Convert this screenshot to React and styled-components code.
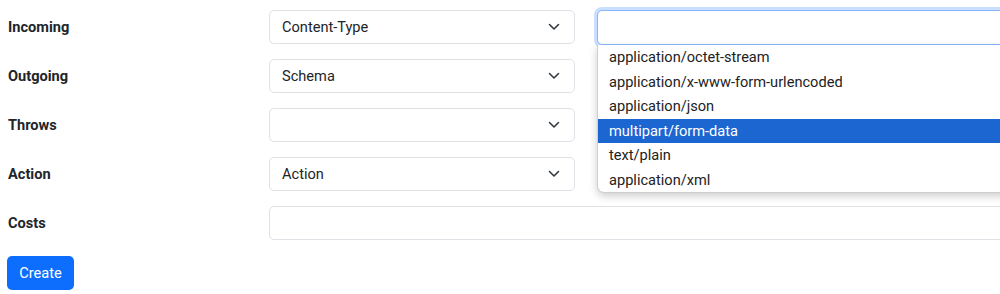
import React from "react";
import styled, { createGlobalStyle } from "styled-components";

const GlobalStyle = createGlobalStyle`
  html, body {
    margin: 0;
    padding: 0;
    background: #fff;
    overflow: hidden;
  }
  body {
    font-family: Roboto, "Liberation Sans", sans-serif;
    color: #212529;
    font-size: 14.6px;
  }
`;

const Page = styled.div`
  position: relative;
  width: 1000px;
  height: 294px;
  overflow: hidden;
  padding: 10px 0 0 8px;
  box-sizing: border-box;
`;

const Form = styled.div`
  display: flex;
  flex-direction: column;
  gap: 15px;
`;

const Row = styled.div`
  display: flex;
  align-items: center;
  gap: 22px;
  height: 34px;
`;

const Label = styled.div`
  flex-shrink: 0;
  width: 261px;
  margin-right: -22px;
  font-weight: 700;
  font-size: 14.6px;
`;

const SelectBox = styled.div`
  box-sizing: border-box;
  width: ${(p) => p.width || 306}px;
  height: ${(p) => (p.focused ? 35 : 34)}px;
  flex-shrink: 0;
  display: flex;
  align-items: center;
  justify-content: space-between;
  padding: 0 14px 0 12px;
  border: 1px solid ${(p) => (p.focused ? "#86b7fe" : "#dee2e6")};
  border-radius: 5px;
  background: #fff;
  box-shadow: ${(p) => (p.focused ? "0 0 0 3px rgba(13, 110, 253, 0.22)" : "none")};
  font-size: 14.6px;
  color: #212529;
`;

const Input = styled.div`
  box-sizing: border-box;
  width: 760px;
  height: 34px;
  flex-shrink: 0;
  border: 1px solid #dee2e6;
  border-radius: 5px;
  background: #fff;
`;

const Button = styled.button`
  align-self: flex-start;
  margin-top: 1px;
  margin-left: -1px;
  height: 34px;
  width: 67px;
  border: none;
  border-radius: 5px;
  background: #0d6efd;
  color: #fff;
  font-family: Roboto, "Liberation Sans", sans-serif;
  font-size: 14.6px;
  cursor: pointer;
`;

const Dropdown = styled.ul`
  position: absolute;
  top: 45px;
  left: 597px;
  width: 420px;
  margin: 0;
  padding: 0;
  list-style: none;
  background: #fff;
  border: 1px solid #cfcfcf;
  border-top: none;
  border-radius: 0 0 7px 7px;
  box-shadow: 0 3px 9px rgba(0, 0, 0, 0.2);
`;

const Option = styled.li`
  height: 24.5px;
  line-height: 24.5px;
  padding-left: 11px;
  font-size: 14.6px;
  color: ${(p) => (p.active ? "#fff" : "#222")};
  background: ${(p) => (p.active ? "#1c66d2" : "transparent")};
`;

const Chevron = () => (
  <svg width="12" height="8" viewBox="0 0 12 8" fill="none">
    <path d="M1.5 1.5 6 6l4.5-4.5" stroke="#343a40" strokeWidth="1.6" strokeLinecap="round" strokeLinejoin="round" />
  </svg>
);

const Select = ({ value, width, focused, noArrow }) => (
  <SelectBox width={width} focused={focused}>
    <span>{value}</span>
    {!noArrow && <Chevron />}
  </SelectBox>
);

const options = [
  "application/octet-stream",
  "application/x-www-form-urlencoded",
  "application/json",
  "multipart/form-data",
  "text/plain",
  "application/xml",
];

const App = () => {
  return (
    <Page>
      <GlobalStyle />
      <Form>
        <Row>
          <Label>Incoming</Label>
          <Select value="Content-Type" />
          <Select value="" width={430} focused noArrow />
        </Row>
        <Row>
          <Label>Outgoing</Label>
          <Select value="Schema" />
        </Row>
        <Row>
          <Label>Throws</Label>
          <Select value="" />
        </Row>
        <Row>
          <Label>Action</Label>
          <Select value="Action" />
        </Row>
        <Row>
          <Label>Costs</Label>
          <Input />
        </Row>
        <Button>Create</Button>
      </Form>
      <Dropdown>
        {options.map((o) => (
          <Option key={o} active={o === "multipart/form-data"}>
            {o}
          </Option>
        ))}
      </Dropdown>
    </Page>
  );
};

export default App;
